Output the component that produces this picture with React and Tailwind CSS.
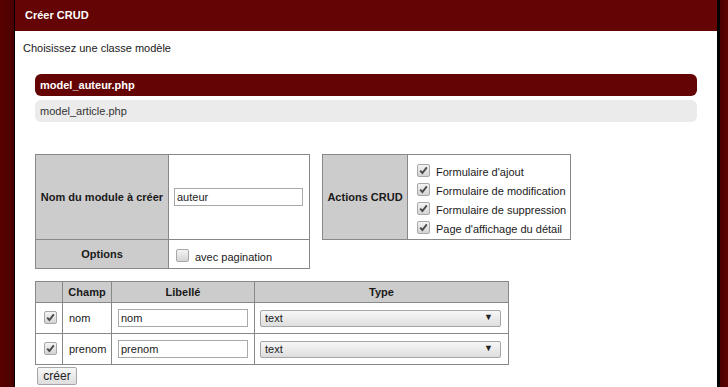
import React from 'react';

const Check = ({ checked = true }) => (
  <span className="inline-flex h-[13px] w-[13px] shrink-0 items-center justify-center rounded-[2px] border border-[#a8a8a8] bg-gradient-to-b from-[#f4f4f4] to-[#d4d4d4]">
    {checked && (
      <svg width="9" height="9" viewBox="0 0 9 9">
        <path d="M1.2 4.6 L3.4 7 L7.8 1.4" fill="none" stroke="#4a4a4a" strokeWidth="1.9" />
      </svg>
    )}
  </span>
);

const TextInput = ({ value, className }) => (
  <div className={`flex h-[18px] items-center border border-[#a9a9a9] bg-white px-[2px] text-[11px] text-[#222] ${className}`}>
    {value}
  </div>
);

const Select = ({ value }) => (
  <div className="flex h-[17px] w-[241px] items-center justify-between rounded-[2px] border border-[#a6a6a6] bg-gradient-to-b from-[#f7f7f7] to-[#dedede] pl-[4px] pr-[7px] text-[11px] text-[#222]">
    <span>{value}</span>
    <span className="text-[9px]">▼</span>
  </div>
);

const crudActions = [
  "Formulaire d'ajout",
  'Formulaire de modification',
  'Formulaire de suppression',
  "Page d'affichage du détail",
];

const fields = ['nom', 'prenom'];

export default function App() {
  return (
    <div className="flex h-[387px] w-[728px] overflow-hidden bg-[#5e0303] font-['Liberation_Sans',Arial,sans-serif] text-[11px] text-[#1a1a1a]">
      <div className="w-[14px] bg-gradient-to-r from-[#5a0202] to-[#4a0000]" />
      <div className="w-[1px] bg-black" />
      <div className="flex w-[702px] flex-col bg-white">
        <div className="flex h-[31px] shrink-0 items-center bg-[#650404] pl-[10px] text-[11px] font-bold text-white">
          Créer CRUD
        </div>
        <div className="pl-[8px] pt-[10px] leading-[14px]">Choisissez une classe modèle</div>

        <div className="ml-[20px] mt-[19px] flex w-[662px] flex-col gap-[4px]">
          <div className="flex h-[22px] items-center rounded-[6px] bg-[#650404] pl-[5px] font-bold text-white">
            model_auteur.php
          </div>
          <div className="flex h-[22px] items-center rounded-[6px] bg-[#ebebeb] pl-[5px] text-[#333]">
            model_article.php
          </div>
        </div>

        <div className="ml-[20px] mt-[32px] flex items-start gap-[12px]">
          <table className="w-[275px] border-collapse border border-[#888]">
            <tbody>
              <tr className="h-[85px]">
                <td className="w-[133px] whitespace-nowrap border border-[#888] bg-[#cccccc] text-center font-bold">
                  Nom du module à créer
                </td>
                <td className="border border-[#888] pl-[5px]">
                  <TextInput value="auteur" className="w-[129px]" />
                </td>
              </tr>
              <tr className="h-[29px]">
                <td className="whitespace-nowrap border border-[#888] bg-[#cccccc] text-center font-bold">Options</td>
                <td className="border border-[#888] pl-[7px]">
                  <div className="flex items-center gap-[6px] pt-[2px]">
                    <Check checked={false} />
                    <span className="whitespace-nowrap pt-[4px]">avec pagination</span>
                  </div>
                </td>
              </tr>
            </tbody>
          </table>

          <table className="w-[249px] border-collapse border border-[#888]">
            <tbody>
              <tr className="h-[85px]">
                <td className="w-[85px] whitespace-nowrap border border-[#888] bg-[#cccccc] text-center font-bold">
                  Actions CRUD
                </td>
                <td className="border border-[#888] pl-[9px]">
                  <div className="flex flex-col gap-[6px] pt-[3px]">
                    {crudActions.map((a) => (
                      <div key={a} className="flex h-[13px] items-start gap-[6px] leading-[13px]">
                        <Check />
                        <span className="mt-[2px] whitespace-nowrap">{a}</span>
                      </div>
                    ))}
                  </div>
                </td>
              </tr>
            </tbody>
          </table>
        </div>

        <table className="ml-[20px] mt-[12px] w-[474px] border-collapse border border-[#888]">
          <thead>
            <tr className="h-[21px] bg-[#cccccc] font-bold">
              <th className="w-[27px] border border-[#888]" />
              <th className="w-[49px] border border-[#888] text-center">Champ</th>
              <th className="w-[143px] border border-[#888] text-center">Libellé</th>
              <th className="border border-[#888] text-center">Type</th>
            </tr>
          </thead>
          <tbody>
            {fields.map((f) => (
              <tr key={f} className="h-[31px]">
                <td className="border border-[#888] pl-[8px]">
                  <Check />
                </td>
                <td className="border border-[#888] pl-[6px]">{f}</td>
                <td className="border border-[#888] pl-[6px]">
                  <TextInput value={f} className="w-[130px]" />
                </td>
                <td className="border border-[#888] pl-[5px]">
                  <Select value="text" />
                </td>
              </tr>
            ))}
          </tbody>
        </table>

        <div className="ml-[22px] mt-[2px]">
          <button className="flex h-[18px] w-[40px] items-center justify-center rounded-[2px] border border-[#a6a6a6] bg-gradient-to-b from-[#f7f7f7] to-[#dedede] text-[12px] text-[#222]">
            créer
          </button>
        </div>
      </div>
      <div className="w-[3px] bg-black" />
      <div className="flex-1 bg-gradient-to-r from-[#4a0000] to-[#5e0303]" />
    </div>
  );
}
